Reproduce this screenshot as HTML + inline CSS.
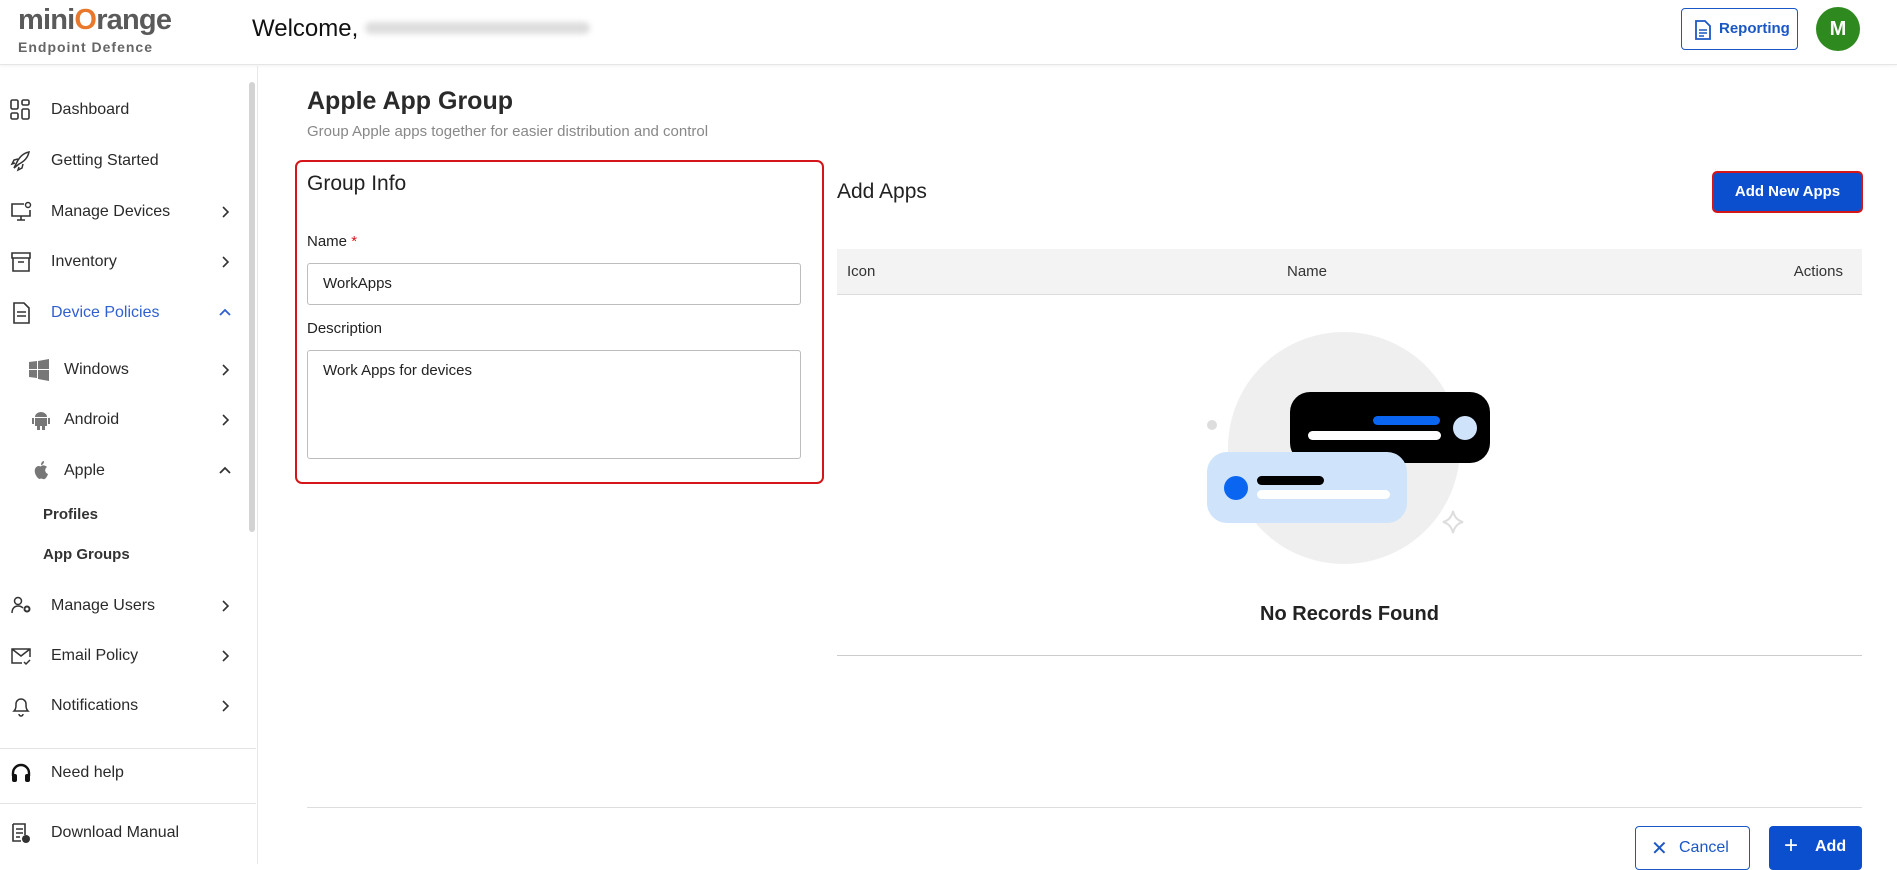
<!DOCTYPE html>
<html><head><meta charset="utf-8"><style>
*{box-sizing:border-box;margin:0;padding:0}
body{width:1897px;height:864px;overflow:hidden;background:#fff;font-family:"Liberation Sans",sans-serif;color:#222;position:relative}
.a{position:absolute}
.hdr{left:0;top:0;width:1897px;height:65px;border-bottom:1px solid #e6e6e6;box-shadow:0 1px 3px rgba(0,0,0,.06);background:#fff}
.side{left:0;top:66px;width:258px;height:798px;border-right:1px solid #e8e8e8}
.it{position:absolute;left:0;width:250px;font-size:16px;color:#2a2a2a}
.it .ic{position:absolute;left:10px;top:-10px;width:22px;height:22px}
.it .tx{position:absolute;left:51px;top:-8px}
.it .ch{position:absolute;left:218px;top:-6px;width:14px;height:14px}
.lbl{font-size:15px;color:#222}
.inp{border:1px solid #bdbdbd;border-radius:3px;background:#fff;font-size:15px;color:#222;padding-left:15px}
</style></head><body>
<svg width="0" height="0" style="position:absolute"><defs>
<symbol id="r" viewBox="0 0 14 14"><path d="M5 2l5 5-5 5" fill="none" stroke="#333" stroke-width="1.6"/></symbol>
<symbol id="u" viewBox="0 0 14 14"><path d="M2 9l5-5 5 5" fill="none" stroke="#333" stroke-width="1.8"/></symbol>
<symbol id="ub" viewBox="0 0 14 14"><path d="M2 9l5-5 5 5" fill="none" stroke="#2f5fd0" stroke-width="1.8"/></symbol>
</defs></svg>
<div class="a hdr">
 <div class="a" style="left:18px;top:4px;font-size:29px;font-weight:bold;color:#5a5a5a;letter-spacing:-0.8px">mini<span style="color:#e8792c">O</span>range</div>
 <div class="a" style="left:18px;top:39px;font-size:14px;font-weight:bold;color:#666;letter-spacing:1px">Endpoint Defence</div>
 <div class="a" style="left:252px;top:15px;font-size:24px;color:#111">Welcome,</div>
 <div class="a" style="left:365px;top:22px;width:225px;height:12px;background:#ddd;border-radius:6px;filter:blur(3px)"></div>
 <div class="a" style="left:1681px;top:8px;width:117px;height:42px;border:1px solid #1b57c4;border-radius:4px;color:#1b57c4;font-size:15px;font-weight:bold">
  <svg class="a" style="left:12px;top:11px" width="18" height="20" viewBox="0 0 18 20"><path d="M2 1h9l5 5v13H2z" fill="none" stroke="#1b57c4" stroke-width="1.8"/><path d="M5 10h8M5 13h8M5 16h5" stroke="#1b57c4" stroke-width="1.6"/></svg>
  <span class="a" style="left:37px;top:11px">Reporting</span></div>
 <div class="a" style="left:1816px;top:7px;width:44px;height:44px;border-radius:50%;background:#2e8a1f;color:#fff;font-size:20px;font-weight:bold;text-align:center;line-height:44px">M</div>
</div>
<div class="a side">
 <div class="a" style="left:249px;top:16px;width:6px;height:450px;background:#d3d3d3;border-radius:3px"></div>
</div>
<div style="position:absolute;left:0;top:0">
 <div class="it" style="top:109px"><svg class="ic" viewBox="0 0 22 22"><g fill="none" stroke="#333" stroke-width="1.6"><rect x="1" y="1" width="7" height="9" rx="1.5"/><rect x="12" y="1" width="7" height="5" rx="1.5"/><rect x="1" y="14" width="7" height="6" rx="1.5"/><rect x="12" y="10" width="7" height="10" rx="1.5"/></g></svg><span class="tx">Dashboard</span></div>
 <div class="it" style="top:160px"><svg class="ic" viewBox="0 0 22 22"><path d="M4 18l3-6c3-6 7-9 12-10-1 5-4 9-10 12zM5 13l-3 1 2-4 4-1M9 17l-1 3 4-2 1-4" fill="none" stroke="#333" stroke-width="1.5"/></svg><span class="tx">Getting Started</span></div>
 <div class="it" style="top:211px"><svg class="ic" viewBox="0 0 22 22"><path d="M14 3H2v12h18v-6M11 15v4M7 19h8" fill="none" stroke="#333" stroke-width="1.6"/><circle cx="18" cy="4" r="2.5" fill="none" stroke="#333" stroke-width="1.4"/></svg><span class="tx">Manage Devices</span><svg class="ch"><use href="#r"/></svg></div>
 <div class="it" style="top:261px"><svg class="ic" viewBox="0 0 22 22"><path d="M2 2h18v5H2zM3 7v13h16V7M8 11h6" fill="none" stroke="#333" stroke-width="1.6"/></svg><span class="tx">Inventory</span><svg class="ch"><use href="#r"/></svg></div>
 <div class="it" style="top:312px;color:#2f5fd0"><svg class="ic" viewBox="0 0 22 22"><path d="M4 1h10l5 5v15H4z" fill="none" stroke="#333" stroke-width="1.6"/><path d="M7 10h9M7 14h9" stroke="#333" stroke-width="1.4"/></svg><span class="tx">Device Policies</span><svg class="ch"><use href="#ub"/></svg></div>
 <div class="it" style="top:369px"><svg class="ic" style="left:28px" viewBox="0 0 22 22"><path d="M1 3l8-1v8H1zM10 2l11-2v10H10zM1 11h8v8l-8-1zM10 11h11v11l-11-2z" fill="#777"/></svg><span class="tx" style="left:64px">Windows</span><svg class="ch"><use href="#r"/></svg></div>
 <div class="it" style="top:419px"><svg class="ic" style="left:30px" viewBox="0 0 22 22"><path d="M5 8a6 5 0 0 1 12 0zM5 9h12v8H5zM2 9h2v6H2zM18 9h2v6h-2zM7 17h3v4H7zM12 17h3v4h-3z" fill="#777"/></svg><span class="tx" style="left:64px">Android</span><svg class="ch"><use href="#r"/></svg></div>
 <div class="it" style="top:470px"><svg class="ic" style="left:30px" viewBox="0 0 22 22"><path d="M11 6c2-1 4-1 6 1-3 2-2 6 1 7-1 3-3 6-5 5-1 0-2-1-3 0-2 0-4-3-5-6-1-4 1-7 4-7 1 0 2 1 2 0zM11 5c0-2 1-4 3-4 0 2-1 4-3 4z" fill="#777"/></svg><span class="tx" style="left:64px">Apple</span><svg class="ch"><use href="#u"/></svg></div>
 <div class="it" style="top:514px"><span class="tx" style="left:43px;font-size:15px;font-weight:bold;color:#333">Profiles</span></div>
 <div class="it" style="top:554px"><span class="tx" style="left:43px;font-size:15px;font-weight:bold;color:#333">App Groups</span></div>
 <div class="it" style="top:605px"><svg class="ic" viewBox="0 0 22 22"><circle cx="8" cy="6" r="3.5" fill="none" stroke="#333" stroke-width="1.5"/><path d="M2 18c0-5 3-7 6-7s4 1 5 2" fill="none" stroke="#333" stroke-width="1.5"/><circle cx="17" cy="14" r="2.5" fill="none" stroke="#333" stroke-width="2"/></svg><span class="tx">Manage Users</span><svg class="ch"><use href="#r"/></svg></div>
 <div class="it" style="top:655px"><svg class="ic" viewBox="0 0 22 22"><path d="M12 18H2V4h18v8M2 4l9 7 9-7M14 17l2 2 4-4" fill="none" stroke="#333" stroke-width="1.5"/></svg><span class="tx">Email Policy</span><svg class="ch"><use href="#r"/></svg></div>
 <div class="it" style="top:705px"><svg class="ic" viewBox="0 0 22 22"><path d="M4 16c2-2 2-4 2-7a5 5 0 0 1 10 0c0 3 0 5 2 7zM9 19a2 2 0 0 0 4 0" fill="none" stroke="#333" stroke-width="1.5"/></svg><span class="tx">Notifications</span><svg class="ch"><use href="#r"/></svg></div>
 <div class="a" style="left:0;top:748px;width:256px;border-top:1px solid #e4e4e4"></div>
 <div class="it" style="top:772px"><svg class="ic" viewBox="0 0 22 22"><path d="M3 14v-3a8 8 0 0 1 16 0v3" fill="none" stroke="#111" stroke-width="2.4"/><rect x="2" y="12" width="5" height="8" rx="2" fill="#111"/><rect x="15" y="12" width="5" height="8" rx="2" fill="#111"/></svg><span class="tx">Need help</span></div>
 <div class="a" style="left:0;top:803px;width:256px;border-top:1px solid #e4e4e4"></div>
 <div class="it" style="top:832px"><svg class="ic" viewBox="0 0 22 22"><path d="M3 2h12v11M3 2v17h8M6 7h7M6 11h7M6 15h4" fill="none" stroke="#333" stroke-width="1.6"/><circle cx="16" cy="17" r="4" fill="#333"/></svg><span class="tx">Download Manual</span></div>
</div>

<div class="a" style="left:307px;top:87px;font-size:25px;font-weight:bold;color:#2a2a2a">Apple App Group</div>
<div class="a" style="left:307px;top:123px;font-size:15px;color:#888">Group Apple apps together for easier distribution and control</div>

<div class="a" style="left:295px;top:160px;width:529px;height:324px;border:2px solid #d4161b;border-radius:7px"></div>
<div class="a" style="left:307px;top:172px;font-size:21px;color:#222">Group Info</div>
<div class="a lbl" style="left:307px;top:233px">Name <span style="color:#d4161b">*</span></div>
<div class="a inp" style="left:307px;top:263px;width:494px;height:42px;line-height:40px">WorkApps</div>
<div class="a lbl" style="left:307px;top:320px">Description</div>
<div class="a inp" style="left:307px;top:350px;width:494px;height:109px;padding-top:11px">Work Apps for devices</div>

<div class="a" style="left:837px;top:180px;font-size:21px;color:#222">Add Apps</div>
<div class="a" style="left:1712px;top:171px;width:151px;height:42px;border:2px solid #d4161b;border-radius:5px;background:#0b4fce;color:#fff;font-size:15px;font-weight:bold;text-align:center;line-height:38px">Add New Apps</div>
<div class="a" style="left:837px;top:249px;width:1025px;height:46px;background:#f3f3f3;border-bottom:1px solid #ddd;font-size:15px;color:#333">
 <span class="a" style="left:10px;top:14px">Icon</span><span class="a" style="left:450px;top:14px">Name</span><span class="a" style="right:19px;top:14px">Actions</span></div>
<svg class="a" style="left:1180px;top:320px" width="340" height="260" viewBox="1180 320 340 260">
 <circle cx="1344" cy="448" r="116" fill="#efefef"/>
 <circle cx="1212" cy="425" r="5" fill="#ddd"/>
 <rect x="1290" y="392" width="200" height="71" rx="20" fill="#000"/>
 <rect x="1373" y="416" width="67" height="9" rx="4.5" fill="#0a66f0"/>
 <rect x="1308" y="431" width="133" height="9" rx="4.5" fill="#fff"/>
 <circle cx="1465" cy="428" r="12" fill="#cfe3fb"/>
 <rect x="1207" y="452" width="200" height="71" rx="20" fill="#cfe3fb"/>
 <circle cx="1236" cy="488" r="12" fill="#0a66f0"/>
 <rect x="1257" y="476" width="67" height="9" rx="4.5" fill="#000"/>
 <rect x="1257" y="490" width="133" height="9" rx="4.5" fill="#fff"/>
 <path d="M1453 511q2 9 10 11q-8 2-10 11q-2-9-10-11q8-2 10-11z" fill="none" stroke="#ddd" stroke-width="2"/>
</svg>
<div class="a" style="left:837px;top:603px;width:1025px;text-align:center;font-size:20px;font-weight:bold;color:#222">No Records Found</div>
<div class="a" style="left:837px;top:655px;width:1025px;border-top:1px solid #ccc"></div>
<div class="a" style="left:307px;top:807px;width:1555px;border-top:1px solid #ddd"></div>
<div class="a" style="left:1635px;top:826px;width:115px;height:44px;border:1px solid #1b57c4;border-radius:4px;color:#1b57c4;font-size:16px"><span class="a" style="left:15px;top:9px;font-size:20px">✕</span><span class="a" style="left:43px;top:12px">Cancel</span></div>
<div class="a" style="left:1769px;top:826px;width:93px;height:44px;background:#0b4fce;border-radius:4px;color:#fff;font-size:16px;font-weight:bold"><span class="a" style="left:15px;top:6px;font-size:24px;font-weight:normal">+</span><span class="a" style="left:46px;top:12px">Add</span></div>
</body></html>
